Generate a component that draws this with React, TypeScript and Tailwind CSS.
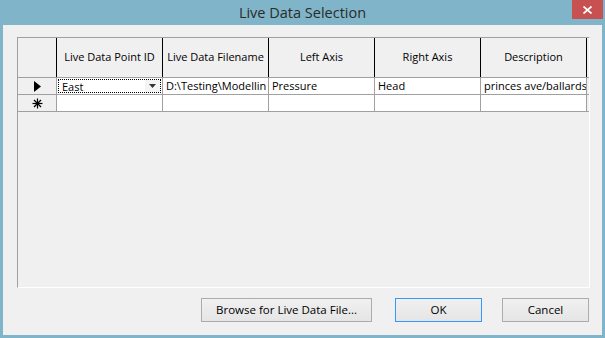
const columns = [
  "Live Data Point ID",
  "Live Data Filename",
  "Left Axis",
  "Right Axis",
  "Description",
];

// values as far as the narrow columns show them
const row = ["East", "D:\\Testing\\Modellin", "Pressure", "Head", "princes ave/ballards"];

const NewRowStar = () => (
  <svg width="11" height="11" viewBox="0 0 11 11" stroke="#000" strokeWidth="1.2">
    <line x1="5.5" y1="0.5" x2="5.5" y2="10.5" />
    <line x1="0.5" y1="5.5" x2="10.5" y2="5.5" />
    <line x1="2" y1="2" x2="9" y2="9" />
    <line x1="9" y1="2" x2="2" y2="9" />
  </svg>
);

const Button = ({ label, width, focused }: { label: string; width: string; focused?: boolean }) => (
  <button
    className={`${width} h-[24px] border ${
      focused ? "border-[#3399ff]" : "border-[#acacac]"
    } bg-gradient-to-b from-[#f0f0f0] to-[#e5e5e5] text-[11.5px] text-black`}
  >
    {label}
  </button>
);

export default function App() {
  return (
    <div
      className="w-[605px] h-[338px] bg-[#80b4c8] flex flex-col overflow-hidden"
      style={{ fontFamily: '"Open Sans", "Noto Sans", sans-serif' }}
    >
      {/* title bar */}
      <div className="h-[25px] flex items-start relative shrink-0">
        <div className="flex-1 h-[25px] flex items-center justify-center text-[14.5px] text-[#2b2b2b]">
          Live Data Selection
        </div>
        <div className="absolute right-[2px] top-0 w-[31px] h-[19px] bg-[#c75050] flex items-center justify-center">
          <svg width="9" height="8" viewBox="0 0 9 8" stroke="#fff" strokeWidth="1.8">
            <line x1="0.5" y1="0.5" x2="8.5" y2="7.5" />
            <line x1="8.5" y1="0.5" x2="0.5" y2="7.5" />
          </svg>
        </div>
      </div>

      {/* client area */}
      <div className="mx-[3px] mb-[3px] h-[310px] bg-[#f0f0f0] flex flex-col pl-[14px] pr-[13px] pt-[12px]">
        <div className="w-[573px] h-[251px] border-t border-l border-t-[#a0a0a0] border-l-[#a0a0a0] border-r border-b border-r-white border-b-white flex flex-col text-[11px] text-black">
          {/* header */}
          <div className="flex h-[40px] border-b border-[#a0a0a0]">
            <div className="w-[39px] border-r border-black" />
            {columns.map((c) => (
              <div
                key={c}
                className="w-[106px] border-r border-black flex items-center justify-center whitespace-nowrap overflow-hidden"
              >
                {c}
              </div>
            ))}
          </div>

          {/* current row */}
          <div className="flex h-[17px] border-b border-[#a0a0a0] leading-[15px]">
            <div className="w-[39px] border-r border-[#a0a0a0] flex items-center justify-center">
              <svg width="7" height="11" viewBox="0 0 7 11">
                <polygon points="0,0 7,5.5 0,11" fill="#000" />
              </svg>
            </div>
            <div className="w-[106px] border-r border-[#a0a0a0] bg-white p-px">
              <div className="h-full border border-dotted border-black flex items-center">
                <span className="flex-1 pl-[3px]">{row[0]}</span>
                <span className="w-[15px] h-full bg-[#f4f4f4] flex items-center justify-center">
                  <svg width="7" height="4" viewBox="0 0 7 4">
                    <polygon points="0,0 7,0 3.5,4" fill="#333" />
                  </svg>
                </span>
              </div>
            </div>
            {row.slice(1).map((v) => (
              <div
                key={v}
                className="w-[106px] border-r border-[#a0a0a0] bg-white px-[3px] whitespace-nowrap overflow-hidden"
              >
                {v}
              </div>
            ))}
          </div>

          {/* new row */}
          <div className="flex h-[17px] border-b border-[#a0a0a0]">
            <div className="w-[39px] border-r border-[#a0a0a0] flex items-center justify-center">
              <NewRowStar />
            </div>
            {columns.map((c) => (
              <div key={c} className="w-[106px] border-r border-[#a0a0a0] bg-white" />
            ))}
          </div>
        </div>

        <div className="flex justify-end items-center mt-[10px]">
          <Button label="Browse for Live Data File..." width="w-[171px]" />
          <div className="w-[23px]" />
          <Button label="OK" width="w-[87px]" focused />
          <div className="w-[20px]" />
          <Button label="Cancel" width="w-[87px]" />
        </div>
      </div>
    </div>
  );
}
